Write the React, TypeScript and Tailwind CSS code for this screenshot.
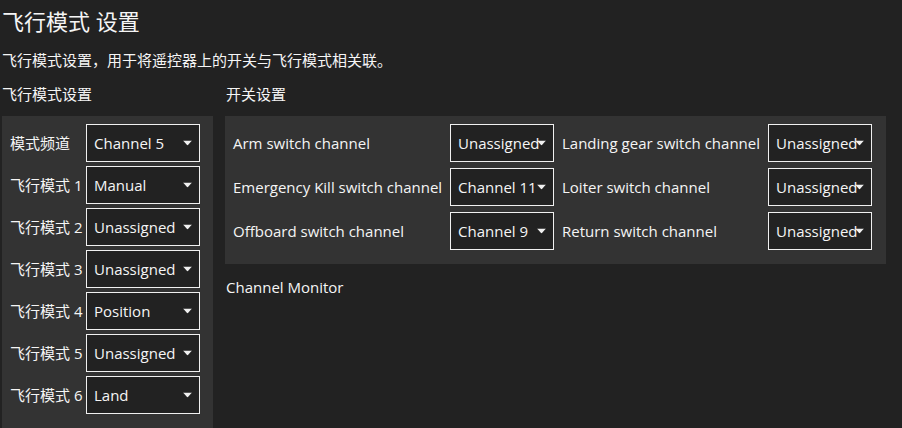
const modes: [string, string][] = [
  ["模式频道", "Channel 5"],
  ["飞行模式 1", "Manual"],
  ["飞行模式 2", "Unassigned"],
  ["飞行模式 3", "Unassigned"],
  ["飞行模式 4", "Position"],
  ["飞行模式 5", "Unassigned"],
  ["飞行模式 6", "Land"],
];

const switches: [string, string, string, string][] = [
  ["Arm switch channel", "Unassigned", "Landing gear switch channel", "Unassigned"],
  ["Emergency Kill switch channel", "Channel 11", "Loiter switch channel", "Unassigned"],
  ["Offboard switch channel", "Channel 9", "Return switch channel", "Unassigned"],
];

function Combo({ value, wide }: { value: string; wide?: boolean }) {
  return (
    <div
      className={`relative h-[38px] ${wide ? "w-[114px]" : "w-[104px]"} border border-[#f0f0f0] bg-[#222222] flex items-center pl-[7px] overflow-hidden`}
    >
      <span className="whitespace-nowrap leading-5">{value}</span>
      <svg
        className="absolute right-[7px] top-1/2 -translate-y-1/2"
        width="9"
        height="5"
        viewBox="0 0 9 5"
      >
        <path d="M0 0H9L4.5 5Z" fill="#f0f0f0" />
      </svg>
    </div>
  );
}

export default function App() {
  return (
    <div
      className="w-full h-[428px] overflow-hidden bg-[#222222] text-[#f5f5f5] px-[2px] text-[15px]"
      style={{ fontFamily: '"Open Sans", "Noto Sans CJK SC", sans-serif' }}
    >
      <h1 className="pt-[6px] text-[22px] leading-[30px]">飞行模式 设置</h1>
      <p className="mt-[14px] leading-5">
        飞行模式设置，用于将遥控器上的开关与飞行模式相关联。
      </p>
      <div className="mt-[14px] flex gap-3">
        <div className="w-[211px] flex flex-col">
          <div className="leading-5">飞行模式设置</div>
          <div className="mt-3 bg-[#333333] pl-2 pr-[12px] pt-2 pb-[14px] grid grid-cols-[72px_114px] gap-x-1 gap-y-1 items-center">
            {modes.map(([label, value]) => (
              <>
                <span key={label + "l"} className="whitespace-nowrap leading-5">
                  {label}
                </span>
                <Combo key={label + "c"} value={value} wide />
              </>
            ))}
          </div>
        </div>
        <div className="flex flex-col">
          <div className="pl-px leading-5">开关设置</div>
          <div className="mt-3 w-[661px] bg-[#333333] pl-2 pr-[14px] pt-2 pb-[14px] grid grid-cols-[209px_104px_198px_104px] gap-x-2 gap-y-[6px] items-center">
            {switches.map(([l1, v1, l2, v2]) => (
              <>
                <span key={l1} className="whitespace-nowrap leading-5">{l1}</span>
                <Combo key={l1 + "c"} value={v1} />
                <span key={l2} className="whitespace-nowrap leading-5">{l2}</span>
                <Combo key={l2 + "c"} value={v2} />
              </>
            ))}
          </div>
          <div className="mt-[13px] pl-px leading-5">Channel Monitor</div>
        </div>
      </div>
    </div>
  );
}
